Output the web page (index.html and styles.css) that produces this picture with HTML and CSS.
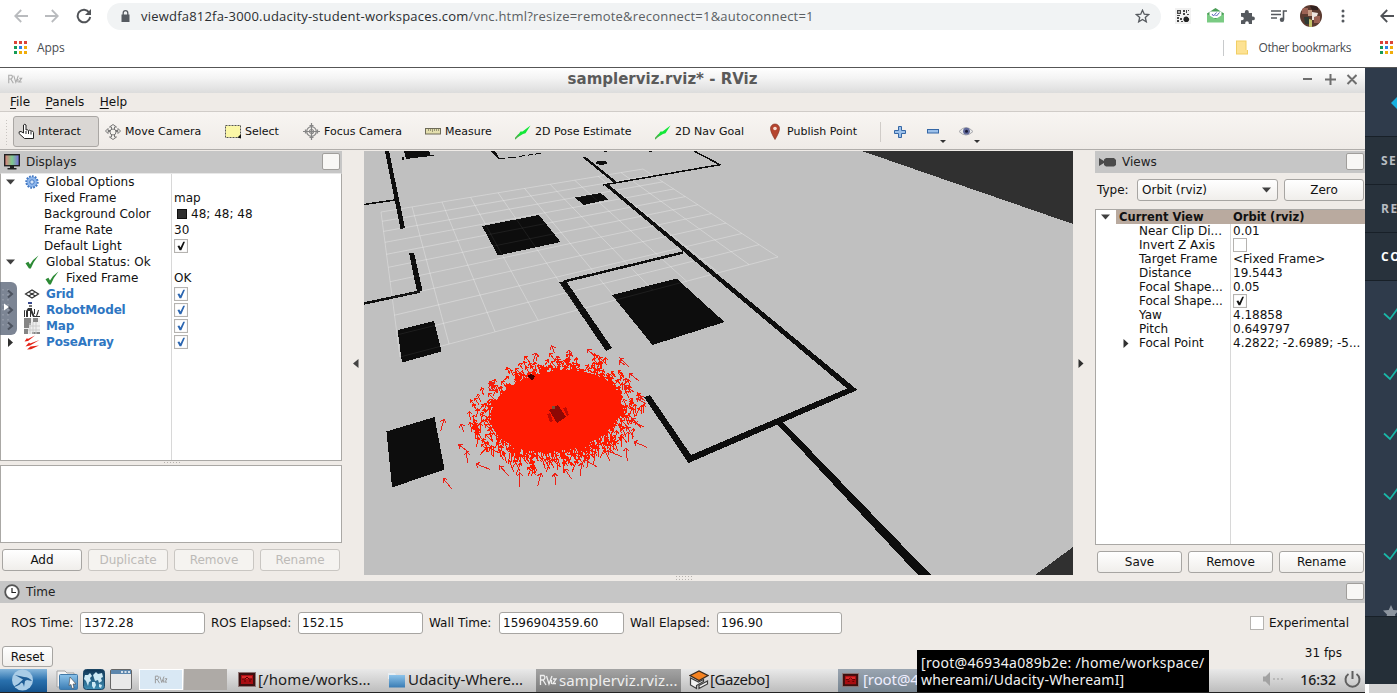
FILE: index.html
```html
<!DOCTYPE html>
<html lang="en">
<head>
<meta charset="utf-8">
<title>samplerviz.rviz* - RViz</title>
<link rel="stylesheet" href="styles.css">
</head>
<body>
<svg class="defs" width="0" height="0">
  <defs>
    <linearGradient id="rainbow"><stop offset="0" stop-color="#e07a7a"/><stop offset=".5" stop-color="#7fca8e"/><stop offset="1" stop-color="#7a6ae0"/></linearGradient>
    <linearGradient id="folderBlue" x2="0" y2="1"><stop offset="0" stop-color="#8cc3ea"/><stop offset="1" stop-color="#3a7cb4"/></linearGradient>
    <linearGradient id="sky" x2="0" y2="1"><stop offset="0" stop-color="#0e3556"/><stop offset="1" stop-color="#3f8fb5"/></linearGradient>
    <symbol id="apps" viewBox="0 0 13 13"><path fill="#db4437" d="M0 0h3v3H0zM5 0h3v3H5zM10 0h3v3h-3z"/><path fill="#159b57" d="M0 5h3v3H0zM0 10h3v3H0z"/><path fill="#2b84ea" d="M5 5h3v3H5z"/><path fill="#f0ad0b" d="M10 5h3v3h-3zM5 10h3v3H5zM10 10h3v3h-3z"/></symbol>
    <symbol id="back" viewBox="0 0 14 14"><path d="M14 7H1.500M7.200 1 1.200 7l6 6" fill="none" stroke="currentColor" stroke-width="1.800"/></symbol>
    <symbol id="tick" viewBox="0 0 13 13"><rect x=".5" y=".5" width="12" height="12" fill="#fff" stroke="#b5b3b0"/><path d="M3.200 6.600 5 6l1 1.800L8.600 2.600h1.600L6.800 10.500H5.200z" fill="currentColor"/></symbol>
    <symbol id="ok" viewBox="0 0 14 14"><path d="M.5 8.200 3.400 6.800 5 9.600Q8 4 13.500.5 8.800 6 5.800 13.500H4z" fill="#2c8a35"/></symbol>
    <symbol id="down" viewBox="0 0 9 6"><path d="M0 .5h9L4.500 5.500z" fill="#404040"/></symbol>
    <symbol id="right" viewBox="0 0 6 9"><path d="M.5 0v9l5-4.500z" fill="#303030"/></symbol>
    <symbol id="needle" viewBox="0 0 16 16"><path d="M.5 14.500 5.500 7.500 7.500 7.500 15.500 1.500 10.500 9.200 8 10z" fill="#12e838"/><path d="M0 15 4 10.500" stroke="#4ab04a" stroke-width="1.500" fill="none"/></symbol>
    <symbol id="rv" viewBox="0 0 18 12"><path d="M1.500 11V1.500H5q2 2-.5 4.500H2M4 6l3 5M7.500 2l2.500 8 3-8M12.500 6v4M14 5h3l-3 4.500h3" fill="none" stroke="currentColor" stroke-width="1.300"/></symbol>
    <symbol id="bot" viewBox="0 0 18 16"><rect x=".5" y=".5" width="17" height="14" fill="#3c1010" stroke="#8e7777"/><path d="M3 3h12v9H3z" fill="#a90d12"/><path d="M4 4h10v3H4z" fill="#d92a2a"/><path d="M4 7h3l2-2 2 2h3M6 9h2m3 0h2" stroke="#5b0000" fill="none"/></symbol>
    <symbol id="check" viewBox="0 0 18 16"><path d="m1 8.500 6 5.500L18-1" fill="none" stroke="#19b8a8" stroke-width="1.700"/></symbol>
  </defs>
</svg>

<header class="chrome">
  <div class="chrome-main">
    <div class="address-row">
      <svg class="nav dim" width="14" height="14"><use href="#back"/></svg>
      <svg class="nav dim flip" width="14" height="14"><use href="#back"/></svg>
      <svg class="nav" width="16" height="16" viewBox="0 0 16 16"><path d="M13.200 4.500A6.300 6.300 0 1 0 14.200 9" fill="none" stroke="currentColor" stroke-width="2"/><path d="M15 1v6H9z" fill="currentColor"/></svg>
      <div class="omnibox">
        <svg width="9" height="12" viewBox="0 0 9 12"><path d="M.5 4.500h8V12h-8z" fill="#555a60"/><path d="M2.200 5V3a2.300 2.300 0 0 1 4.600 0v2" fill="none" stroke="#555a60" stroke-width="1.300"/></svg>
        <span class="url">viewdfa812fa-3000.udacity-student-workspaces.com<i>/vnc.html?resize=remote&amp;reconnect=1&amp;autoconnect=1</i></span>
        <svg class="star" width="15" height="14" viewBox="0 0 15 14"><path d="m7.500 1.200 1.800 4 4.300.4-3.300 2.900 1 4.300-3.800-2.300-3.800 2.300 1-4.300L1.400 5.600l4.300-.4z" fill="none" stroke="#55595e" stroke-width="1.300"/></svg>
      </div>
      <div class="extensions">
        <svg width="16" height="16" viewBox="0 0 16 16"><rect width="16" height="16" fill="#f1f1f1"/><path d="M2 2h4v4H2zM2 9h2v2H2zM5 10h2v2H5zM2 12h2v2H2zM6 13h2v1H6z" fill="#444"/><path d="M3.300 3.300h1.500v1.500H3.300z" fill="#fff"/><path d="M8 2h2v2H8zM11 2h1v3h-1zM13 2h1v1h-1zM8 5h2v2H8zM12 6h2v1h-2zM2 7h3v1H2z" fill="#444"/><circle cx="11.300" cy="11.300" r="2.800" fill="#222"/><path d="M11.500 7.500h3V11z" fill="#f1f1f1"/></svg>
        <svg width="17" height="16" viewBox="0 0 17 16"><path d="M0 5.500 8.500 0 17 5.500V14H0z" fill="#4c9e58"/><path d="M2.500 3.500h12V10h-12z" fill="#fff"/><path d="m0 6 8.500 5L17 6v8.500H0z" fill="#7acb83"/><path d="m5 6 1.500 2 3-3.500M8.500 7l1 1 3-3.500" fill="none" stroke="#5b67b8"/></svg>
        <svg width="15" height="15" viewBox="0 0 15 15"><path d="M1 4h3.800V3a2 2 0 0 1 4 0v1H12v3.500h1a1.900 1.900 0 0 1 0 3.800h-1V15H8.800v-1a1.800 1.800 0 0 0-3.600 0v1H1v-3.700h1a1.800 1.800 0 0 0 0-3.600H1z" fill="#55595e"/></svg>
        <svg width="16" height="14" viewBox="0 0 16 14"><path d="M0 2h10M0 5.500h10M0 9h6M12.500 10.500V2H16" fill="none" stroke="#55595e" stroke-width="1.600"/><circle cx="11" cy="10.800" r="2.200" fill="#55595e"/></svg>
        <svg width="22" height="22" viewBox="0 0 22 22"><clipPath id="face"><circle cx="11" cy="11" r="11"/></clipPath><g clip-path="url(#face)"><path d="M0 0h22v22H0z" fill="#5b3a30"/><path d="M2 3h6v6H2zM14 11h6v7h-6z" fill="#9c6254"/><path d="M8 5h4v6H8z" fill="#c59a83"/><path d="M12 7l6 1-1 3-3 1v3h-2z" fill="#eee5df"/><path d="M4 12h5v7H5z" fill="#303b35"/><path d="M9 14l3 1v7H9z" fill="#c5c46a"/><path d="M10 1h8v4h-6z" fill="#32211e"/></g></svg>
        <svg width="4" height="14" viewBox="0 0 4 14"><g fill="#55595e"><circle cx="2" cy="2" r="1.500"/><circle cx="2" cy="7" r="1.500"/><circle cx="2" cy="12" r="1.500"/></g></svg>
      </div>
    </div>
    <div class="bookmark-row">
      <svg width="13" height="13"><use href="#apps"/></svg><span>Apps</span>
      <div class="other"><svg width="12" height="15" viewBox="0 0 12 15"><path d="M0 .5h10.500V10H12v4.500H0z" fill="#f1ce63"/><path d="M1 1.500h8.500V10H11v3.500H1z" fill="#fde293"/></svg><span>Other bookmarks</span></div>
    </div>
  </div>
  <div class="chrome-next">
    <svg class="nav" width="14" height="14"><use href="#back"/></svg>
    <svg width="13" height="13"><use href="#apps"/></svg>
  </div>
</header>

<div class="page">
  <main class="desktop">
    <div class="titlebar">
      <svg class="app-mark" width="18" height="10"><use href="#rv"/></svg>
      <h1>samplerviz.rviz* - RViz</h1>
      <svg class="winbtns" width="54" height="11" viewBox="0 0 54 11"><path d="M0 5h9M22 5.500h11M27.500 0v11M44.500 1l9 9M53.500 1l-9 9" fill="none" stroke="#6e6e6e" stroke-width="2"/></svg>
    </div>
    <nav class="menubar"><span><u>F</u>ile</span><span><u>P</u>anels</span><span><u>H</u>elp</span></nav>
    <div class="toolbar">
      <i class="grip"></i>
      <div class="tool pressed"><svg width="17" height="17" viewBox="0 0 17 17"><path d="M5.500 10V2q1.300-1.500 2.500 0v5q1-1 2.500.5 1-.8 2.500.5 2-.5 2.500 1.500v6h-9L1 10.500Q.5 8 3 8.500z" fill="#fff" stroke="#222"/><path d="M8 8v3m2.500-3v3m2.500-2.500v3" stroke="#222"/></svg>Interact</div>
      <div class="tool w120"><svg width="16" height="16" viewBox="0 0 16 16"><g fill="#f4f2ee" stroke="#777"><path d="M6.500 5V3H4.500L8 .5 11.500 3h-2v2M6.500 11v2h-2L8 15.500l3.500-2.500h-2v-2"/><path d="M5 6.500H3V4.500L.5 7 3 9.500v-2h2M11 6.500h2v-2L15.500 7 13 9.500v-2h-2"/><circle cx="8" cy="8" r="3"/></g></svg>Move Camera</div>
      <div class="tool w78"><svg width="16" height="14" viewBox="0 0 16 14"><rect x=".5" y=".5" width="15" height="12" fill="#fbf7a7" stroke="#555" stroke-dasharray="2 1"/><path d="M12.500 12.500 16 9v4.500z" fill="#111"/></svg>Select</div>
      <div class="tool w122"><svg width="17" height="17" viewBox="0 0 17 17"><g fill="none" stroke="#858585" stroke-width="1.200"><circle cx="8.500" cy="8.500" r="4.800"/><circle cx="8.500" cy="8.500" r="2"/><path d="M8.500 0v17M0 8.500h17M6.500 2.500h4M6.500 14.500h4M2.500 6.500v4M14.500 6.500v4"/></g></svg>Focus Camera</div>
      <div class="tool w90"><svg width="16" height="7" viewBox="0 0 16 7"><rect x=".5" y=".5" width="15" height="5.500" fill="#e4dfae" stroke="#6e6b58"/><path d="M3.500 1v2M5.500 1v2M7.500 1v3M9.500 1v2M11.500 1v2M13.500 1v2" stroke="#999676"/></svg>Measure</div>
      <div class="tool w140"><svg width="16" height="16"><use href="#needle"/></svg>2D Pose Estimate</div>
      <div class="tool w112"><svg width="16" height="16"><use href="#needle"/></svg>2D Nav Goal</div>
      <div class="tool w113"><svg width="16" height="17" viewBox="0 0 16 17"><path d="M8 16.500Q3.500 9 3.500 5.500a4.500 4.500 0 0 1 9 0Q12.500 9 8 16.500z" fill="#b5452f" stroke="#8a3322" stroke-width=".7"/><circle cx="8" cy="5.500" r="1.800" fill="#f6dcd2"/></svg>Publish Point</div>
      <i class="sep"></i>
      <svg class="plus" width="12" height="12" viewBox="0 0 12 12"><path d="M4.500.5h3v4h4v3h-4v4h-3v-4h-4v-3h4z" fill="#9cc0ea" stroke="#3567a5"/></svg>
      <svg class="minus" width="20" height="20" viewBox="0 0 20 20"><rect x=".5" y="6.500" width="11" height="3.500" fill="#9cc0ea" stroke="#3567a5"/><path d="M13 17h6l-3 3z" fill="#333"/></svg>
      <svg class="eye" width="22" height="20" viewBox="0 0 22 20"><path d="M0 8.500q7-8 14 0-7 7-14 0z" fill="#e9e9ea" stroke="#a9a9ad"/><circle cx="7.500" cy="8.200" r="3.400" fill="#61699a"/><circle cx="7.500" cy="8.200" r="1.500" fill="#191b38"/><path d="M15 17h6l-3 3z" fill="#333"/></svg>
    </div>

    <div class="docks">
      <section class="displays">
        <div class="dock-head"><svg width="16" height="16" viewBox="0 0 16 16"><rect x=".7" y=".7" width="14.600" height="11" fill="url(#rainbow)" stroke="#222" stroke-width="1.400"/><path d="M6 12h4v2h2.500v1.500h-9V14H6z" fill="#222"/></svg><span>Displays</span><i class="float"></i></div>
        <div class="tree">
          <div class="row"><div class="name lvl0"><svg class="twist" width="9" height="6"><use href="#down"/></svg><svg class="ico" width="14" height="14" viewBox="0 0 14 14"><circle cx="7" cy="7" r="5.500" fill="#7fabe6" stroke="#4379c4" stroke-width="2.400" stroke-dasharray="1.700 1.100"/><circle cx="7" cy="7" r="4.700" fill="#8fb7ec"/><circle cx="7" cy="7" r="2.200" fill="#d5e4f8" stroke="#4379c4"/></svg>Global Options</div></div>
          <div class="row"><div class="name lvl1">Fixed Frame</div><div>map</div></div>
          <div class="row"><div class="name lvl1">Background Color</div><div><i class="swatch"></i>48; 48; 48</div></div>
          <div class="row"><div class="name lvl1">Frame Rate</div><div>30</div></div>
          <div class="row"><div class="name lvl1">Default Light</div><div><svg class="cb" width="14" height="14"><use href="#tick"/></svg></div></div>
          <div class="row"><div class="name lvl0"><svg class="twist" width="9" height="6"><use href="#down"/></svg><svg class="ico" width="14" height="14"><use href="#ok"/></svg>Global Status: Ok</div></div>
          <div class="row"><div class="name lvl2"><svg class="ico" width="14" height="14"><use href="#ok"/></svg>Fixed Frame</div><div>OK</div></div>
          <div class="row link"><div class="name lvl0"><i class="twist"></i><svg class="ico" width="14" height="14" viewBox="0 0 14 14"><path d="M.5 7 7 3l6.500 4L7 11zM3.700 5 10.300 9M10.300 5 3.700 9" fill="none" stroke="#333" stroke-width="1.200"/></svg>Grid</div><div><svg class="cb" width="14" height="14"><use href="#tick"/></svg></div></div>
          <div class="row link"><div class="name lvl0"><i class="twist"></i><svg class="ico" width="16" height="16" viewBox="0 0 16 16"><path d="M4 0h4v2H4z" fill="#394a8d"/><path d="M5 3h3v2H5z" fill="#777"/><path d="M4 6h4v2l1 2 2 5H9l-2-4v4H6V9H4v6H2V9H1v6H0V8l2 1zM10 7h1v5h-1zM14 8h1l-1 4-1 2h-1zM10 14h6v1h-6z" fill="#333"/></svg>RobotModel</div><div><svg class="cb" width="14" height="14"><use href="#tick"/></svg></div></div>
          <div class="row link"><div class="name lvl0"><i class="twist"></i><svg class="ico" width="16" height="16" viewBox="0 0 16 16"><path d="M0 0h16v16H0z" fill="#eee"/><path d="M0 0h7v7H5v3H0zM9 0h5v4H9zM0 11h4v5H0zM8 14h8v2H8z" fill="#858585"/><path d="M6 5v11M9 4v12M12 4v12M5 8h11M4 12h12" stroke="#ccc"/></svg>Map</div><div><svg class="cb" width="14" height="14"><use href="#tick"/></svg></div></div>
          <div class="row link"><div class="name lvl0"><svg class="twist" width="9" height="9"><use href="#right"/></svg><svg class="ico" width="16" height="15" viewBox="0 0 16 15"><path d="M.5 6.500 3 3l.8 1L11 .5 4 6zM1.500 11.500 5 7.500l1 1L15.500 5 6 10.500zM3 14.500 6.500 11.500 15 10.500 7 14.300z" fill="#e42216"/></svg>PoseArray</div><div><svg class="cb" width="14" height="14"><use href="#tick"/></svg></div></div>
        </div>
        <div class="hsplit"></div>
        <div class="help"></div>
        <div class="btns"><button>Add</button><button disabled>Duplicate</button><button disabled>Remove</button><button disabled>Rename</button></div>
      </section>
      <div class="vsplit left"><svg width="6" height="9" viewBox="0 0 6 9"><path d="M5.500 0v9L0 4.500z" fill="#444"/></svg></div>

      <svg class="scene" width="709" height="424" viewBox="364 151 709 424" shape-rendering="crispEdges">
        <path fill="#c0c0c0" d="M364 151h709v424H364z"/>
        <path fill="#303030" d="M862 151h211v73zM1035 575l38-28v28z"/>
        <path id="grid" fill="none" stroke="#fff" stroke-opacity=".24" shape-rendering="auto"/>
        <g fill="#0d0d0d">
          <path d="M385 151h4l16 77-4.500 1zM404 151h25l2 5-25 3zM402 157h2v3h-2zM431 155h3v1h-3z"/>
          <path d="M575 197.500l25.500-4.500 8 6.500-25 5.500zM482 226l57-11 21.500 27-62.500 13.500zM612 295l64.500-16.500 48 43.500-72 23zM397.500 330l36.500-9 7.500 30.500-39.500 11zM386.500 431.500l48-14.500 10 52.500-52.500 18z"/>
          <path d="M409 252.500h5l8.500 38.500-5.500.8zM559 282l7-1 46 67-6 3zM582 157l3-.5 32 25.500h-4z"/>
          <path d="M603 184h5L857.500 390 688.500 463 644 397l6-2 41 60 156-66.500zM777 424l6-2 148 153h-13z"/>
          <path d="M491 151h4l5 8h-2z"/>
          <ellipse cx="601.500" cy="162.700" rx="6" ry="2"/>
        </g>
        <g fill="none" stroke="#0d0d0d">
          <path d="M364 204.500 395 200M603 185l117-20.300L694 151" stroke-width="1.500"/>
          <path d="M499 159l6-.5m3-.5 8-1m3-.5 6-1m3-.3 5-.7m2-.3 6-.8M604 151.500h3M649 151.500h3"/>
          <path d="M364 303.500 420 291.500M564 281.500 683 252.500" stroke-width="2.500"/>
        </g>
        <use href="#grid" opacity=".3"/>
        <ellipse cx="556" cy="411" rx="66" ry="40" transform="rotate(-9 556 411)" fill="#ff1a00"/>
        <path id="poses" fill="none" stroke="#ff1a00"/>
        <path id="strays" fill="none" stroke="#ee2015"/>
        <g>
          <path d="M549 410l9-5 8 12-9 6z" fill="#8d0805"/><path d="M547 414l3-1 3 8-3 1zM563 408l3-1 3 8-2 1z" fill="#c00a04"/><path d="M552 406h3v3h-3z" fill="#73553a"/><path d="M527 376l4-2 4 2-1 3-3 1z" fill="#400"/>
        </g>
      </svg>

      <div class="vsplit right"><svg width="6" height="9"><use href="#right"/></svg></div>
      <section class="views">
        <div class="dock-head"><svg width="17" height="10" viewBox="0 0 17 10"><path d="M0 1l5 3V2.500L7 1h8l2 2v5l-2 1.500H7L5 8V6L0 9z" fill="#4a4a4a"/></svg><span>Views</span><i class="float"></i></div>
        <div class="type-row"><label>Type:</label><div class="select">Orbit (rviz)<svg width="9" height="6"><use href="#down"/></svg></div><button>Zero</button></div>
        <div class="tree">
          <div class="row current"><div class="name"><svg width="9" height="6"><use href="#down"/></svg><b>Current View</b></div><div>Orbit (rviz)</div></div>
          <div class="row"><div class="name">Near Clip Di...</div><div>0.01</div></div>
          <div class="row"><div class="name">Invert Z Axis</div><div><i class="box"></i></div></div>
          <div class="row"><div class="name">Target Frame</div><div>&lt;Fixed Frame&gt;</div></div>
          <div class="row"><div class="name">Distance</div><div>19.5443</div></div>
          <div class="row"><div class="name">Focal Shape...</div><div>0.05</div></div>
          <div class="row"><div class="name">Focal Shape...</div><div><svg width="14" height="14"><use href="#tick"/></svg></div></div>
          <div class="row"><div class="name">Yaw</div><div>4.18858</div></div>
          <div class="row"><div class="name">Pitch</div><div>0.649797</div></div>
          <div class="row"><div class="name fold"><svg width="6" height="9"><use href="#right"/></svg>Focal Point</div><div>4.2822; -2.6989; -5...</div></div>
        </div>
        <div class="btns"><button>Save</button><button>Remove</button><button>Rename</button></div>
      </section>
    </div>

    <div class="time-split"></div>
    <section class="time">
      <div class="dock-head"><svg width="16" height="16" viewBox="0 0 16 16"><circle cx="8" cy="8" r="6.800" fill="#fff" stroke="#555" stroke-width="1.800"/><path d="M8 4v4.500h4" fill="none" stroke="#222" stroke-width="1.200"/></svg><span>Time</span><i class="float"></i></div>
      <div class="fields">
        <label class="f1">ROS Time:</label><div class="field">1372.28</div>
        <label class="f2">ROS Elapsed:</label><div class="field">152.15</div>
        <label class="f3">Wall Time:</label><div class="field">1596904359.60</div>
        <label class="f4">Wall Elapsed:</label><div class="field">196.90</div>
        <div class="exp"><i class="box"></i>Experimental</div>
      </div>
      <div class="status"><button>Reset</button><span>31 fps</span></div>
    </section>

    <footer class="taskbar">
      <div class="start"><svg width="23" height="22" viewBox="0 0 23 22"><circle cx="11.500" cy="11" r="10.500" fill="#a9cce6"/><path d="M2 18Q8 15 12 10.500L4 6l9 2q5 0 8 4l-5-1-2 1-1 6q-1-5-3-4-2 3-8 4z" fill="#1e5c94"/></svg></div>
      <div class="launch">
        <svg width="22" height="22" viewBox="0 0 22 22"><path d="M1 2h8l2 2h7v14H1z" fill="#f4f4f4" stroke="#a3a3a3"/><rect x="3.500" y="5.500" width="18" height="15" rx="1" fill="url(#folderBlue)" stroke="#4079a8"/><path d="m14 8 6 7-3 0 1 4-2 .5-1-4-2 1z" fill="#fff" stroke="#444" stroke-width=".6"/></svg>
        <svg width="22" height="22" viewBox="0 0 22 22"><rect x=".5" y=".5" width="21" height="20" rx="3" fill="url(#sky)" stroke="#1b4564"/><path d="M2 6l3 0 2-2 2 3-2 2 1 3-2 1-1 4-2-5-2-2zM10 6l3-3 2 2 4-1 1 4-2 1 1 3-3 2-1-3-3 1zM9 13l3 0 1 3-2 4-2-3zM16 15l3 1-1 3-2-1z" fill="#cdeaf6"/></svg>
        <svg width="22" height="22" viewBox="0 0 22 22"><rect x=".5" y=".5" width="21" height="20" rx="1.500" fill="#e9e9e9" stroke="#666"/><path d="M1 1h20v4H1z" fill="#5d87ad"/><path d="M11 3h2m1.500 0h2m1.500 0h2" stroke="#fff" stroke-width="1.500"/></svg>
      </div>
      <div class="pager"><i><svg width="16" height="9"><use href="#rv"/></svg></i><i></i></div>
      <div class="task t1"><svg width="18" height="16"><use href="#bot"/></svg><span>[/home/works...</span></div>
      <div class="task t2"><svg width="18" height="16" viewBox="0 0 18 16"><path d="M0 1h7l1 2h9v4H0z" fill="#e8eef2"/><path d="M1 3h16v12.500H1z" fill="url(#folderBlue)"/></svg><span>Udacity-Where...</span></div>
      <div class="task t3"><svg width="18" height="12"><use href="#rv"/></svg><span>samplerviz.rviz...</span></div>
      <div class="task t4"><svg width="20" height="20" viewBox="0 0 20 20"><path d="M1 5.500 10 1l9 4.500-9 5z" fill="#f58220" stroke="#3a2a1d" stroke-width="1.300"/><path d="M1.500 8v7l6 3.500v-3l7-4v-2l-5 2.500zM10 18.500l8.500-4.500v-3L10 15.500z" fill="#f1f1f1" stroke="#3c3c3c" stroke-width="1.200"/></svg><span>[Gazebo]</span></div>
      <div class="task t5"><svg width="17" height="15"><use href="#bot"/></svg><span>[root@4</span></div>
      <div class="tray"><svg width="22" height="14" viewBox="0 0 22 14"><path d="M0 4.500h2.500L7 0v14L2.500 9.500H0z" fill="#a2a2a2"/><path d="M10 7h2m2 0h2m2 0h2" stroke="#b0b0b0" stroke-width="1.500"/></svg><span>16:32</span><svg width="17" height="17" viewBox="0 0 17 17"><path d="M4.500 3A7 7 0 1 0 12.500 3M8.500 0v8" fill="none" stroke="#5f5f5f" stroke-width="2"/></svg></div>
      <div class="tooltip">[root@46934a089b2e: /home/workspace/<br><span>whereami/Udacity-WhereamI]</span></div>
    </footer>
    <div class="vnc-handle"><svg width="17" height="54" viewBox="0 0 17 54"><path d="M3 7v40M8 7v40" stroke="#a4aab5" stroke-dasharray="1.500 3.500"/><path d="M8 8.500l4 3.500-4 3.500M8 24.500l4 3.500-4 3.500M8 40.500l4 3.500-4 3.500" fill="none" stroke="#4c535f" stroke-width="2"/><path d="M4 21.500v7l5-3.500z" fill="#fff"/></svg></div>
  </main>

  <aside class="classroom">
    <div class="hero"><svg width="6" height="12" viewBox="0 0 6 12"><path d="M6 0v12L0 6z" fill="#17b0e0"/></svg></div>
    <div class="tab">SE</div><div class="tab">RE</div><div class="tab on">CO</div>
    <div class="steps">
      <svg width="14" height="16"><use href="#check" width="18" height="16"/></svg><svg width="14" height="16"><use href="#check" width="18" height="16"/></svg><svg width="14" height="16"><use href="#check" width="18" height="16"/></svg><svg width="14" height="16"><use href="#check" width="18" height="16"/></svg><svg width="14" height="16"><use href="#check" width="18" height="16"/></svg><svg width="15" height="14" viewBox="0 0 15 14"><path d="m8 0 2.300 5 5.200.5-3.500 4 1 4.500H3l1-4.500-4-4L5.700 5z" fill="#8d959f"/></svg>
    </div>
    <div class="foot"></div>
    <div class="scroll"></div>
  </aside>
</div>
<script src="scene.js"></script>
</body>
</html>
```

FILE: styles.css
```css
* { box-sizing: border-box; }
body { margin: 0; width: 1397px; height: 693px; overflow: hidden; background: #fff; font: 12px "DejaVu Sans", sans-serif; color: #111; }
svg { display: block; flex: none; }
i { font-style: normal; }
.defs { position: absolute; }
button { font: inherit; color: #111; padding: 0; height: 22px; border: 1px solid #a7a5a2; border-radius: 3px; background: linear-gradient(#fff, #f0eeeb); }
button:disabled { color: #bcbab7; border-color: #c9c6c2; background: #f5f3f0; }

/* browser */
.chrome { display: flex; height: 67px; color: #4a4d51; font: 12px "Open Sans", "Noto Sans", sans-serif; }
.chrome-main { width: 1365px; }
.address-row { display: flex; align-items: center; height: 32px; padding-left: 14px; gap: 17px; }
.nav { color: #505357; }
.dim { color: #b9bbbe; }
.flip { transform: scaleX(-1); }
.omnibox { display: flex; align-items: center; width: 1054px; height: 27px; margin-left: -2px; padding: 0 11px 0 14px; border-radius: 14px; background: #f1f3f4; }
.url { margin-left: 11px; font-size: 13px; letter-spacing: .21px; color: #2b2e31; white-space: nowrap; }
.url i { color: #5b5f63; }
.star { margin-left: auto; }
.extensions { display: flex; align-items: center; gap: 16px; margin-left: -3px; }
.extensions svg:nth-child(5) { margin-left: -3px; }
.extensions svg:nth-child(6) { margin-left: 3px; }
.bookmark-row { display: flex; align-items: center; height: 31px; padding: 0 14px; gap: 10px; }
.bookmark-row span { letter-spacing: -.1px; }
.other { display: flex; align-items: center; gap: 10px; margin-left: auto; height: 16px; padding-left: 12px; border-left: 1px solid #c8cacc; }
.other span { letter-spacing: -.4px; }
.chrome-next { display: flex; flex-direction: column; gap: 18px; padding: 9px 0 0 15px; overflow: hidden; }

.page { display: flex; height: 626px; border-top: 1px solid #555; }
.desktop { position: relative; width: 1365px; background: #efebe7; }

/* window frame */
.titlebar { display: flex; align-items: center; height: 25px; padding: 0 8px 3px 6px; background: linear-gradient(#fff, #f4f4f4 40%, #dcdcdc); }
.app-mark { color: #aaa; }
.titlebar h1 { flex: 1; margin: 0 0 0 -2px; text-align: center; font: bold 15px/22px "DejaVu Sans", sans-serif; color: #5a5a5a; }
.menubar { display: flex; gap: 15px; height: 19px; padding: 1px 10px 0; line-height: 16px; border-bottom: 1px solid #d0ccc8; }
.menubar span:nth-child(2) { margin: 0 .5px; }
.menubar u { text-underline-offset: 2px; }
.toolbar { display: flex; align-items: center; height: 38px; padding: 2px 0 0 5px; font-size: 11px; background: linear-gradient(#f8f5f2, #efebe7); border-bottom: 1px solid #b0adaa; }
.grip { width: 4px; height: 26px; margin-right: 4px; background: radial-gradient(#c9c5c1 1px, transparent 1px) 0 0 / 3px 3px; }
.tool { display: flex; align-items: center; gap: 4px; flex: none; white-space: nowrap; }
.pressed { width: 86px; height: 31px; margin-right: 6px; padding-left: 4px; gap: 3px; border: 1px solid #aaa7a4; border-radius: 3px; background: #dad7d4; }
.w120 { width: 120px; } .w78 { width: 78px; } .w122 { width: 122px; } .w90 { width: 90px; }
.w140 { width: 140px; } .w112 { width: 112px; } .w113 { width: 113px; }
.sep { width: 1px; height: 20px; margin: 0 13px 0 0; background: #d0ccc8; }
.minus { margin: 2px 0 0 21px; }
.eye { margin: 2px 0 0 12px; }

/* docks */
.docks { display: flex; height: 424px; margin-top: 1px; }
.dock-head { display: flex; align-items: center; gap: 6px; height: 22px; padding: 0 2px 0 4px; background: #c6c6c6; color: #222; }
.float { width: 18px; height: 17px; margin: -1px 0 0 auto; border: 1px solid #a09e9b; border-radius: 2px; background: #f8f7f5; }
.views .float, .time .float { margin-right: -1px; }
.displays { width: 342px; }
.displays .tree { height: 288px; border: 1px solid #aaa8a5; border-top-color: #e8e8e8; background: linear-gradient(90deg, #fff 170px, #d8d8d8 170px, #d8d8d8 171px, #fff 171px); }
.displays .row { display: grid; grid-template-columns: 173px 1fr; height: 16px; line-height: 16px; white-space: nowrap; }
.row > div { display: flex; align-items: center; }
.cb { margin-top: -1px; }
.lvl0 { padding-left: 5px; }
.twist { width: 9px; margin-right: 9px; }
.ico { width: 16px; margin-right: 6px; }
.lvl1 { padding-left: 43px; }
.lvl2 { padding-left: 43px; }
.swatch { width: 10px; height: 10px; margin: 0 4px 0 3px; background: #303030; border: 1px solid #111; }
.link .name { color: #2e76c2; font-weight: bold; letter-spacing: -.15px; }
.link { color: #2b65b0; }
.hsplit { height: 4px; background: radial-gradient(#b5b1ad .8px, transparent 1px) 0 0 / 3px 3px; width: 18px; margin-left: 163px; }
.help { height: 78px; border: 1px solid #aaa8a5; background: #fff; }
.btns { display: flex; gap: 6px; padding: 6px 2px 0; }
.btns button { flex: 1; }
.vsplit { display: flex; align-items: center; width: 22px; }
.vsplit.left { padding-left: 11px; }
.vsplit.right { padding-left: 5px; }

.views { width: 270px; }
.type-row { display: flex; align-items: center; height: 36px; padding: 0 1px 2px 2px; }
.type-row label { width: 40px; }
.select { display: flex; align-items: center; justify-content: space-between; width: 141px; height: 22px; padding: 0 6px 0 4px; margin-right: 6px; border: 1px solid #a7a5a2; border-radius: 3px; background: linear-gradient(#fff, #f0eeeb); }
.type-row button { flex: 1; }
.views .tree { height: 336px; border: 1px solid #aaa8a5; border-right: 0; background: linear-gradient(90deg, #fff 134px, #d8d8d8 134px, #d8d8d8 135px, #fff 135px); }
.views .row { display: grid; grid-template-columns: 137px 1fr; height: 14px; line-height: 14px; white-space: nowrap; }
.views .name { padding-left: 43px; }
.views .fold { padding-left: 27px; gap: 10px; }
.views .current { font-weight: bold; font-size: 11.500px; background: linear-gradient(90deg, #fff 20px, #b9aa9f 20px); }
.views .current .name { padding-left: 5px; gap: 9px; }
.box { width: 14px; height: 14px; border: 1px solid #b5b3b0; background: #fff; }
.views .btns { padding: 6px 1px 0 2px; }

/* time */
.time-split { height: 6px; width: 18px; margin-left: 675px; background: radial-gradient(#b5b1ad .8px, transparent 1px) 0 0 / 3px 3px; }
.fields { display: flex; align-items: center; height: 39px; padding: 0 16px 0 11px; }
.f1 { width: 69px; } .f2 { width: 87px; } .f3 { width: 70px; } .f4 { width: 87px; }
.field { width: 125px; height: 22px; margin-right: 6px; padding-left: 3px; line-height: 20px; border: 1px solid #a7a5a2; border-radius: 3px; background: #fff; }
.exp { display: flex; align-items: center; gap: 5px; margin-left: auto; }
.status { display: flex; height: 27px; padding: 4px 23px 0 2px; justify-content: space-between; }
.status button { width: 51px; height: 21px; }

/* taskbar */
.taskbar { position: relative; display: flex; height: 24px; border-bottom: 1px solid #222; background: linear-gradient(#e9e9e9, #bdbdbd); font: 15px "Noto Sans", sans-serif; color: #1c1c1c; }
.start { width: 47px; padding-left: 11px; background: linear-gradient(#86b7dc, #2970ad 50%, #15548e); }
.launch { display: flex; gap: 5px; padding: 0 7px 0 9px; }
.pager { display: flex; gap: 1px; }
.pager i { width: 43px; height: 21px; background: #aeaaa6; }
.pager i:first-child { padding: 5px 13px; width: 44px; background: #d9e8f4; border: 1px solid #fff; color: #999; }
.task { display: flex; align-items: center; white-space: nowrap; overflow: hidden; gap: 2px; padding-bottom: 1px; }
.task span { line-height: 20px; margin-top: -2px; }
.t1 { width: 151px; padding-left: 11px; }
.t1 span { letter-spacing: .1px; }
.t2 { width: 158px; padding-left: 10px; }
.t2 span { letter-spacing: -.05px; }
.t3 { width: 145px; padding-left: 3px; background: linear-gradient(#a4a4a4, #7b7b7b); color: #eee; }
.t3 span { margin-top: 0; letter-spacing: .1px; }
.t4 { width: 157px; padding-left: 8px; gap: 1px; }
.t4 span { letter-spacing: -.45px; }
.t5 { width: 90px; padding-left: 4px; gap: 4px; background: linear-gradient(#9aa5b1, #75838f); color: #eef; }
.t5 span { letter-spacing: -.1px; }
.tray { display: flex; align-items: center; gap: 15px; margin-left: auto; padding: 0 4px 3px 0; }
.tray span { font-size: 14px; font-weight: 500; margin-right: -7px; }
.tooltip { position: absolute; left: 917px; bottom: 0; width: 292px; height: 42px; padding: 4px 4px 0; background: #000; color: #f2f2f2; font-size: 14px; line-height: 17px; letter-spacing: .3px; white-space: nowrap; }
.tooltip span { letter-spacing: .22px; }
.vnc-handle { position: absolute; left: 0; top: 214px; width: 17px; height: 53px; border-radius: 0 6px 6px 0; background: rgba(91, 103, 121, .8); }

/* classroom column */
.classroom { width: 32px; background: #2f3b4b; overflow: hidden; }
.hero { height: 69px; padding: 29px 0 0 26px; border-bottom: 1px solid #182028; }
.tab { height: 48px; padding-left: 16px; font: bold 12px/47px "Open Sans", sans-serif; letter-spacing: 1.500px; color: #b8bdc2; background: #28323c; border-bottom: 1px solid #182028; }
.tab.on { color: #fff; }
.steps { display: flex; flex-direction: column; gap: 44px; height: 336px; padding: 24px 0 0 18px; border-bottom: 1px solid #182028; overflow: hidden; }
.foot { height: 67px; background: #252f38; }
.scroll { height: 10px; margin-left: 4px; background: #d4d4d4; box-shadow: -4px 0 #fff; }
```

FILE: scene.js
```js
// Reference grid: a 10 x 10 plane seen in perspective, given by its four corners.
const [a, b, c, d] = [[381, 212], [643, 169], [778, 257], [400, 357]];
const sx = a[0] - b[0] + c[0] - d[0], sy = a[1] - b[1] + c[1] - d[1];
const dx1 = b[0] - c[0], dx2 = d[0] - c[0], dy1 = b[1] - c[1], dy2 = d[1] - c[1];
const det = dx1 * dy2 - dx2 * dy1;
const g = (sx * dy2 - dx2 * sy) / det, h = (dx1 * sy - sx * dy1) / det;
const project = (u, v) => {
  const w = g * u + h * v + 1;
  const x = (b[0] - a[0] + g * b[0]) * u + (d[0] - a[0] + h * d[0]) * v + a[0];
  const y = (b[1] - a[1] + g * b[1]) * u + (d[1] - a[1] + h * d[1]) * v + a[1];
  return (x / w).toFixed(1) + " " + (y / w).toFixed(1);
};
let lines = "";
for (let i = 0; i <= 10; i++) {
  const t = i / 10;
  lines += "M" + project(t, 0) + "L" + project(t, 1) + "M" + project(0, t) + "L" + project(1, t);
}
document.getElementById("grid").setAttribute("d", lines);

// One pose arrow: shaft from tail to tip, with two barbs.
function arrow(tx, ty, bx, by, head) {
  const ang = Math.atan2(by - ty, bx - tx);
  const barb = s => (tx + head * Math.cos(ang + s)).toFixed(1) + " " + (ty + head * Math.sin(ang + s)).toFixed(1);
  return "M" + bx.toFixed(1) + " " + by.toFixed(1) + "L" + tx.toFixed(1) + " " + ty.toFixed(1) +
    "M" + barb(0.75) + "L" + tx.toFixed(1) + " " + ty.toFixed(1) + "L" + barb(-0.75);
}

// Particle cloud, from a fixed seed.
let seed = 7;
const rnd = () => (seed = (seed * 16807) % 2147483647) / 2147483647;
const normal = () => Math.sqrt(-2 * Math.log(rnd())) * Math.cos(6.2832 * rnd());
let cloud = "";
for (let i = 0; i < 2600; i++) {
  const u = normal(), v = normal(), r = Math.hypot(u, v);
  if (r > 2.7) continue;
  const px = u * 33, py = v * 22;
  const x = 556 + px * 0.985 + py * 0.17, y = 413 - px * 0.17 + py * 0.985;
  const ang = -1.75 + normal() * 0.45, len = 7 + Math.max(0, y - 385) * 0.06;
  cloud += arrow(x + Math.cos(ang) * len / 2, y + Math.sin(ang) * len / 2,
    x - Math.cos(ang) * len / 2, y - Math.sin(ang) * len / 2, 3.2);
}
document.getElementById("poses").setAttribute("d", cloud);

// Poses far from the cloud: tip x, tip y, tail x, tail y.
const far = [
  [536, 353, 533, 362], [551.7, 345.7, 554.3, 352.7], [587.3, 349.3, 594.3, 355.7], [620, 358, 628.7, 366.7],
  [629.3, 373.3, 639.3, 381.3], [444, 419.3, 440.7, 430.7], [461, 424, 463.7, 432], [458.7, 444.7, 468.7, 452],
  [466.7, 452, 467.3, 463.3], [476, 464, 490, 469.3], [443.3, 478.7, 451.7, 488.7], [500, 466, 508.7, 476],
  [520, 472.7, 519.7, 486.7], [541, 473.3, 537.7, 486], [554.7, 473.3, 555.7, 485.3], [565, 469.3, 571.7, 479.3],
  [581.3, 463.3, 580.7, 476], [584, 459.3, 596.7, 466.7], [607.3, 450.7, 621.7, 456.7], [626, 448, 627.3, 460.7],
  [634.3, 441.7, 646.7, 447.3], [631.7, 418.3, 641, 427.3], [489.3, 382.7, 496.7, 391], [626.7, 426.7, 633.3, 436.7],
  [636.7, 398.3, 646, 404], [619, 361, 625, 365], [640, 397, 645, 401], [490, 391, 494, 382],
  [569, 350, 570, 362], [571, 353, 567, 364], [557, 356, 560, 367], [626, 378, 624, 390], [625, 386, 634, 392]
];
document.getElementById("strays").setAttribute("d", far.map(p => arrow(...p, 4.2)).join(""));
```
